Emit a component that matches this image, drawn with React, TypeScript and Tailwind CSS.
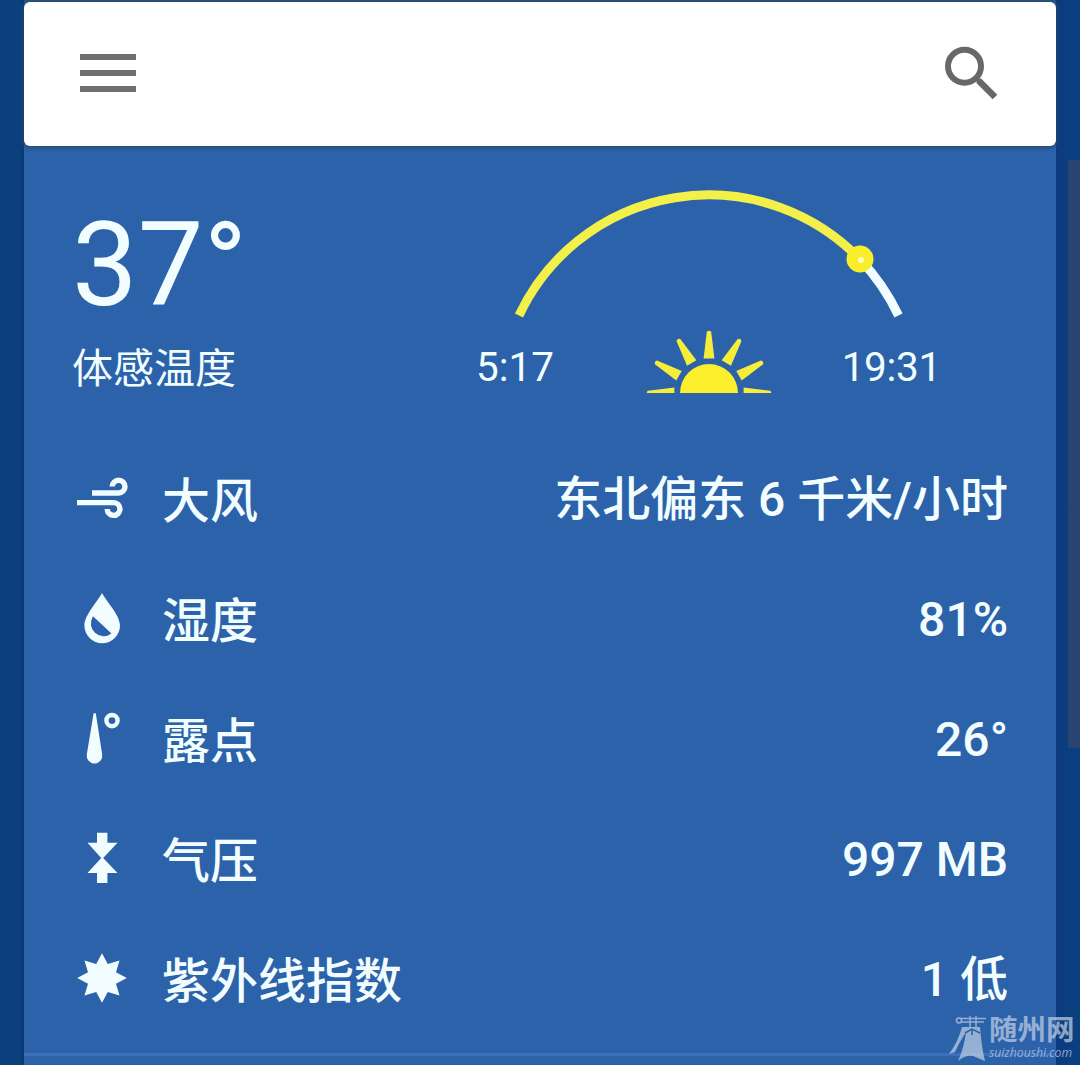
import type { ReactNode } from 'react';

interface Detail {
  label: string;
  value: string;
  icon: ReactNode;
}

const starPoints = Array.from({ length: 16 }, (_, i) => {
  const r = i % 2 === 0 ? 24.8 : 15.2;
  const a = (i * Math.PI) / 8;
  return `${(30 + r * Math.sin(a)).toFixed(1)},${(28 - r * Math.cos(a)).toFixed(1)}`;
}).join(' ');

const details: Detail[] = [
  {
    label: '大风',
    value: '东北偏东 6 千米/小时',
    icon: (
      <g fill="none" stroke="currentColor" strokeWidth="5.4">
        <path d="M20 23H46.5A6.4 6.4 0 1 0 40.2 16.6" />
        <path d="M5 32.6H41.5A6.4 6.4 0 1 1 35.2 39" />
      </g>
    ),
  },
  {
    label: '湿度',
    value: '81%',
    icon: (
      <path
        fill="currentColor"
        fillRule="evenodd"
        d="M30 3C34 11 48 25 48 35.5A17.8 17.8 0 0 1 12.4 35.5C12.4 25 26 11 30 3ZM21 26.3L39.5 43.5A12.8 12.8 0 0 1 21 26.3Z"
      />
    ),
  },
  {
    label: '露点',
    value: '26°',
    icon: (
      <>
        <path fill="currentColor" d="M21.6 3.3H23.8L30.2 44.5A7.8 7.8 0 1 1 14.8 44.5Z" />
        <circle cx="40" cy="10.6" r="5.6" fill="none" stroke="currentColor" strokeWidth="4.4" />
      </>
    ),
  },
  {
    label: '气压',
    value: '997 MB',
    icon: (
      <path
        fill="currentColor"
        d="M25 2.8H35.4V12.8H45.5L31.2 28L45.5 43H35.4V53H25V43H15.5L29.2 28L15.5 12.8H25Z"
      />
    ),
  },
  {
    label: '紫外线指数',
    value: '1 低',
    icon: <polygon fill="currentColor" points={starPoints} />,
  },
];

const SearchBar = () => (
  <header className="relative flex h-36 items-center justify-between rounded-md bg-white pr-14 pl-14 shadow-[0_1px_4px_1px_#2b4c6e]">
    <button aria-label="菜单" className="flex flex-col gap-2.5 pb-0.5">
      <span className="h-1.5 w-14 bg-[#707070]" />
      <span className="h-1.5 w-14 bg-[#707070]" />
      <span className="h-1.5 w-14 bg-[#707070]" />
    </button>
    <button aria-label="搜索">
      <svg width="60" height="60" viewBox="0 0 60 60" fill="none" stroke="#686868">
        <circle cx="24.5" cy="22.3" r="16.5" strokeWidth="6" />
        <path d="M38.5 36.5L55 53" strokeWidth="6.5" />
        <path d="M36 34L41 39" strokeWidth="4" />
      </svg>
    </button>
  </header>
);

const SunArc = () => (
  <svg className="block" width="462" height="140" viewBox="476 186 462 140" fill="none" strokeWidth="9">
    <path d="M860 259.3A209.7 209.7 0 0 1 898.5 315.5" stroke="#f2fdff" />
    <path d="M519 315.5A209.7 209.7 0 0 1 860 259.3" stroke="#f3f04a" />
    <circle cx="860" cy="259" r="13.5" fill="#f9ee2c" />
    <circle cx="861" cy="260" r="3" fill="#fffcc0" />
  </svg>
);

const SunIcon = () => (
  <svg width="128" height="64" viewBox="0 0 128 64" fill="#f6ed3a">
    <path d="M35 64A29 29 0 0 1 93 64Z" fill="#fbee2a" />
    {[-90, -60, -30, 0, 30, 60, 90].map((deg) => (
      <path key={deg} d="M58.6 29.4L61.8 2.8Q64 0.6 66.2 2.8L69.4 29.4Z" transform={`rotate(${deg} 64 64)`} />
    ))}
  </svg>
);

const CurrentWeather = () => (
  <section className="flex h-[294px] justify-between pr-[115px] pl-12">
    <div className="pt-14">
      <div className="h-[126px] text-[117px] leading-[126px]">37°</div>
      <div className="pt-[17px] text-[41px] leading-[48px]">体感温度</div>
    </div>
    <div className="w-[465px] pt-10">
      <SunArc />
      <div className="flex h-[70px] items-center text-[40.5px]">
        <span className="w-[169px] pt-3">5:17</span>
        <SunIcon />
        <span className="w-[168px] pt-3 text-right tracking-[-0.3px]">19:31</span>
      </div>
    </div>
  </section>
);

const DetailRow = ({ label, value, icon }: Detail) => (
  <li className="flex h-[120px] items-center pr-12 pl-12 text-[48px] leading-[60px] font-medium">
    <svg width="60" height="60" viewBox="0 0 60 60">
      {icon}
    </svg>
    <span className="ml-[30px] pt-[3px]">{label}</span>
    <span className="ml-auto">{value}</span>
  </li>
);

const Watermark = () => (
  <div className="absolute right-1 bottom-1 flex text-[#c4d1e6] opacity-70">
    <svg width="40" height="46" viewBox="0 0 40 46">
      <path
        fill="currentColor"
        d="M13 12H31C32 23 33 33 36 46L24 41Q16 40 9 46Q15 33 17 17Q10 28 6 37L0 39Q9 27 13 12Z"
      />
      <path fill="none" stroke="currentColor" strokeWidth="1.5" d="M12 3.5H37M12 7H35M21 1V13M27 1V12" />
      <circle cx="10" cy="5.5" r="2.5" fill="none" stroke="currentColor" strokeWidth="1.5" />
      <path fill="none" stroke="#2b62aa" strokeWidth="1.5" d="M16 18L23 14L31 18M23 15V20" />
    </svg>
    <div className="w-[87px]">
      <div className="text-[28.5px] leading-[32px] font-bold">随州网</div>
      <div className="font-['Open_Sans',sans-serif] text-[12.2px] leading-[12px] font-medium italic">
        suizhoushi.com
      </div>
    </div>
  </div>
);

export default function App() {
  return (
    <main className="relative flex h-[1065px] w-[1080px] overflow-hidden bg-[#0b407f] font-[Roboto,'Noto_Sans_CJK_SC',sans-serif] text-[#f2fdff]">
      <div className="w-6 bg-linear-to-r from-[#0b407f] from-80% to-[#0c3770]" />
      <div className="flex w-[1032px] flex-col bg-[#2b62aa]">
        <div className="h-0.5 bg-[#2d5079]" />
        <SearchBar />
        <CurrentWeather />
        <ul>
          {details.map((detail) => (
            <DetailRow key={detail.label} {...detail} />
          ))}
        </ul>
        <div className="mt-[13px] h-[3px] bg-[#3b70b9]" />
      </div>
      <div className="flex w-6 justify-end bg-linear-to-r from-[#0c3a80] to-[#09427f] pt-40">
        <div className="h-[588px] w-3 bg-[#294470]" />
      </div>
      <Watermark />
    </main>
  );
}
